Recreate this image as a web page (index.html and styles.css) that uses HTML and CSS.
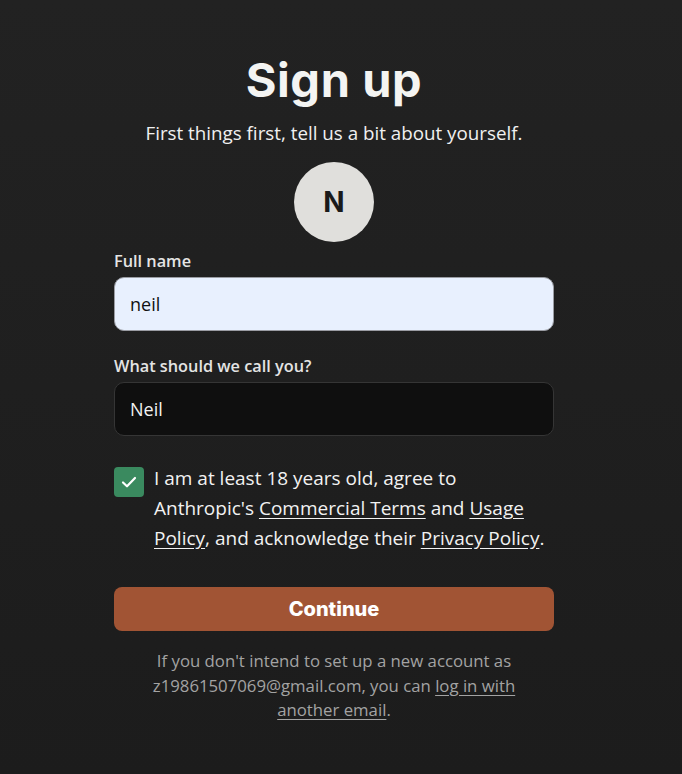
FILE: index.html
```html
<!DOCTYPE html>
<html lang="en">
<head>
<meta charset="utf-8">
<title>Sign up</title>
<link rel="stylesheet" href="styles.css">
</head>
<body>
<main class="page">
  <div class="card">
    <h1 class="title">Sign up</h1>
    <p class="subtitle">First things first, tell us a bit about yourself.</p>
    <div class="avatar">N</div>
    <form class="form">
      <label class="label" for="fullname">Full name</label>
      <input class="input input-autofill" id="fullname" type="text" value="neil">
      <label class="label label-second" for="nick">What should we call you?</label>
      <input class="input input-dark" id="nick" type="text" value="Neil">
      <div class="agree">
        <span class="check">
          <svg width="20" height="20" viewBox="0 0 20 20" fill="none"><path d="M4 10.5 L8 14.3 L16 6" stroke="#ffffff" stroke-width="2.2" stroke-linecap="round" stroke-linejoin="round"/></svg>
        </span>
        <p class="agree-text">I am at least 18 years old, agree to Anthropic's <a href="#">Commercial Terms</a> and <a href="#">Usage Policy</a>, and acknowledge their <a href="#">Privacy Policy</a>.</p>
      </div>
      <button class="btn" type="button">Continue</button>
    </form>
    <p class="footer">If you don't intend to set up a new account as z19861507069@gmail.com, you can <a href="#">log in with another email</a>.</p>
  </div>
</main>
</body>
</html>
```
FILE: styles.css
```css
html, body {
  margin: 0;
  padding: 0;
}
body {
  background: linear-gradient(180deg, #222222 0%, #1c1c1c 100%);
  min-height: 774px;
  font-family: "Open Sans", "Noto Sans", sans-serif;
  color: #f2f2f2;
}
.page {
  display: flex;
  justify-content: center;
  padding: 52px 14px 0 0;
}
.card {
  width: 440px;
  display: flex;
  flex-direction: column;
  align-items: center;
}
.title {
  margin: 0;
  font-family: "Inter", sans-serif;
  font-weight: 700;
  font-size: 47px;
  line-height: 56px;
  color: #f4f4f2;
  letter-spacing: 0.6px;
}
.subtitle {
  margin: 13px 0 0;
  font-size: 18.8px;
  line-height: 24px;
  color: #f0f0f0;
  white-space: nowrap;
}
.avatar {
  margin-top: 17px;
  width: 80px;
  height: 80px;
  border-radius: 50%;
  background: #e0dfdc;
  color: #1a1a1a;
  font-family: "Inter", sans-serif;
  font-weight: 700;
  font-size: 28px;
  display: flex;
  align-items: center;
  justify-content: center;
}
.form {
  width: 100%;
  display: flex;
  flex-direction: column;
  margin-top: 9px;
}
.label {
  font-size: 16.3px;
  font-weight: 600;
  line-height: 20px;
  color: #e4e4e4;
  margin-bottom: 6px;
}
.label-second {
  margin-top: 25px;
}
.input {
  box-sizing: border-box;
  width: 100%;
  height: 54px;
  border-radius: 10px;
  padding: 0 15px;
  font-family: "Open Sans", "Noto Sans", sans-serif;
  font-size: 18px;
  outline: none;
}
.input-autofill {
  background: #e8f0fe;
  border: 1px solid #9a9ca3;
  color: #111111;
}
.input-dark {
  background: #0f0f0f;
  border: 1px solid #353535;
  color: #f2f2f2;
}
.agree {
  display: flex;
  gap: 10px;
  margin-top: 31px;
  align-items: flex-start;
}
.check {
  flex: 0 0 30px;
  width: 30px;
  height: 30px;
  border-radius: 4px;
  background: #3a8a5f;
  display: flex;
  align-items: center;
  justify-content: center;
}
.agree-text {
  margin: -4px 0 0;
  font-size: 19px;
  line-height: 30px;
  color: #f2f2f2;
}
.agree-text a, .footer a {
  color: inherit;
  text-decoration: underline;
  text-underline-offset: 3px;
}
.btn {
  margin-top: 34px;
  height: 44px;
  border: none;
  border-radius: 8px;
  background: #a15434;
  color: #ffffff;
  font-family: "Inter", sans-serif;
  font-weight: 800;
  font-size: 20px;
  cursor: pointer;
}
.footer {
  margin: 18px 0 0;
  width: 400px;
  text-align: center;
  font-size: 16.75px;
  line-height: 24.5px;
  color: #a3a3a3;
}
```
